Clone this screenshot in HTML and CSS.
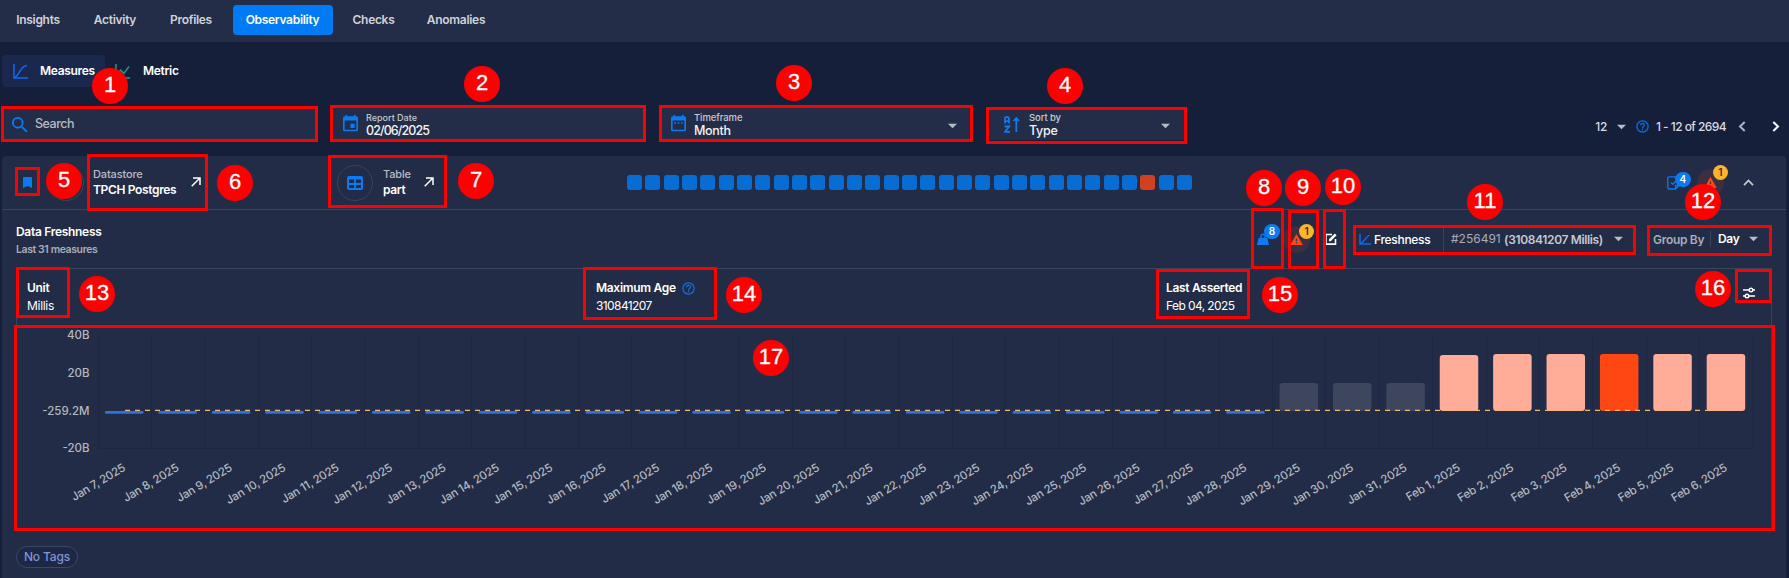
FILE: index.html
```html
<!DOCTYPE html>
<html lang="en">
<head>
<meta charset="utf-8">
<title>Observability</title>
<link rel="stylesheet" href="styles.css">
</head>
<body>
<svg class="defs" width="0" height="0">
  <symbol id="caret" viewBox="0 0 10 6"><path d="M0 .5h10L5 5.5z" fill="currentColor"/></symbol>
  <symbol id="measure" viewBox="0 0 16 16"><path d="M1 0v15h15M1.500 14.500C7.500 12 7.500 1.500 15 1.500" fill="none" stroke="currentColor" stroke-width="1.600"/></symbol>
  <symbol id="help" viewBox="0 0 24 24"><path fill="currentColor" d="M11 18h2v-2h-2v2m1-16A10 10 0 0 0 2 12a10 10 0 0 0 20 0A10 10 0 0 0 12 2m0 18a8 8 0 1 1 0-16 8 8 0 0 1 0 16m0-14a4 4 0 0 0-4 4h2a2 2 0 1 1 4 0c0 2-3 1.750-3 5h2c0-2.250 3-2.500 3-5a4 4 0 0 0-4-4"/></symbol>
  <symbol id="arrow" viewBox="0 0 10 10"><path d="M.7 9.300 8.700 1.300M2 1h7v7" fill="none" stroke="currentColor" stroke-width="1.500"/></symbol>
  <symbol id="alert" viewBox="0 0 22 19"><path fill="currentColor" d="M0 19h22L11 0 0 19m12-3h-2v-2h2v2m0-4h-2V8h2v4"/></symbol>
</svg>
<div class="page">
  <nav class="tabs">
    <span class="tab w1"><b>Insights</b></span>
    <span class="tab w2"><b>Activity</b></span>
    <span class="tab w3"><b>Profiles</b></span>
    <span class="tab w4 active"><b>Observability</b></span>
    <span class="tab w5"><b>Checks</b></span>
    <span class="tab w6"><b>Anomalies</b></span>
  </nav>
  <div class="modes">
    <span class="mode on"><svg class="i15"><use href="#measure"/></svg><span>Measures</span></span>
    <span class="mode metric"><svg class="i15 green" viewBox="0 0 16 16"><path d="M1 0v15h15M1.500 12 6 6.500l3.500 3.500L15 2.500" fill="none" stroke="currentColor" stroke-width="1.600"/></svg><span>Metric</span></span>
  </div>
  <div class="filters">
    <div class="field search">
      <svg class="mag" viewBox="0 0 18 18"><path fill="currentColor" d="M6.500 0A6.500 6.500 0 0 1 13 6.500c0 1.610-.59 3.090-1.560 4.230l.27.27h.79l5 5-1.500 1.500-5-5v-.79l-.27-.27A6.500 6.500 0 1 1 6.500 0m0 2a4.500 4.500 0 1 0 0 9 4.500 4.500 0 0 0 0-9"/></svg>
      <span class="ph">Search</span>
    </div>
    <div class="field date">
      <svg class="cal" viewBox="0 0 18 20"><path fill="currentColor" d="M16 18H2V7h14m-3-7v2H5V0H3v2H2a2 2 0 0 0-2 2v14a2 2 0 0 0 2 2h14a2 2 0 0 0 2-2V4a2 2 0 0 0-2-2h-1V0m-1 11H9v5h5z"/></svg>
      <span class="lv"><small>Report Date</small><span class="dv">02/06/2025</span></span>
    </div>
    <div class="field frame">
      <svg class="cal" viewBox="0 0 18 20"><path fill="currentColor" d="M16 18H2V7h14v11m0-16h-1V0h-2v2H5V0H3v2H2a2 2 0 0 0-2 2v14a2 2 0 0 0 2 2h14a2 2 0 0 0 2-2V4a2 2 0 0 0-2-2M4 9h2v2H4zm4 0h2v2H8zm4 0h2v2h-2z"/></svg>
      <span class="lv"><small>Timeframe</small><span>Month</span></span>
      <svg class="caret"><use href="#caret"/></svg>
    </div>
    <div class="field sort">
      <svg class="az" viewBox="0 0 16 17"><path d="M1 7.500V2.500Q1 1 3 1t2 1.500v5M1 5.200h4M.5 10.500h4.800L1 15.800h5M12.300 16V2M9.500 5l2.800-3 2.800 3" fill="none" stroke="currentColor" stroke-width="1.800"/></svg>
      <span class="lv"><small>Sort by</small><span>Type</span></span>
      <svg class="caret"><use href="#caret"/></svg>
    </div>
    <div class="pager">
      <span class="pn">12</span><svg class="caret"><use href="#caret"/></svg><svg class="help"><use href="#help"/></svg><span class="range">1 - 12 of 2694</span>
      <svg class="chev" viewBox="0 0 8 11"><path d="M6.700 1 2 5.500 6.700 10" fill="none" stroke="#aeb2bd" stroke-width="2"/></svg>
      <svg class="chev next" viewBox="0 0 8 11"><path d="M1.300 1 6 5.500 1.300 10" fill="none" stroke="#fff" stroke-width="2"/></svg>
    </div>
  </div>
  <section class="card">
    <header class="head">
      <svg class="mark" viewBox="0 0 9 11"><path d="M0 1a1 1 0 0 1 1-1h7a1 1 0 0 1 1 1v10L4.500 9 0 11z" fill="currentColor"/></svg>
      <span class="ring store"></span>
      <span class="src s1"><span>Datastore</span><b>TPCH Postgres</b></span>
      <svg class="go"><use href="#arrow"/></svg>
      <span class="ring table"><svg width="16" height="14" viewBox="0 0 16 14"><rect x="1" y="1" width="14" height="12" rx="1" fill="none" stroke="currentColor" stroke-width="2"/><path d="M1 2h14" stroke="currentColor" stroke-width="3"/><path d="M1 8h14M8 3v10" stroke="currentColor" stroke-width="1.800"/></svg></span>
      <span class="src s2"><span>Table</span><b>part</b></span>
      <svg class="go"><use href="#arrow"/></svg>
      <span class="cells" id="cells"></span>
      <span class="status chk"><svg width="13" height="14" viewBox="0 0 13 14"><path d="M8.500 13H2.200Q.8 13 .8 11.600V2.200Q.8.8 2.200.8h8.600q1.400 0 1.400 1.400v7.200zM8.500 13V9.500h3.600M4 6.500l1.800 1.800 3.200-3.300" fill="none" stroke="currentColor" stroke-width="1.300"/></svg><i class="badge">4</i></span>
      <span class="status warn"><svg width="13" height="11"><use href="#alert"/></svg><i class="badge amber">1</i></span>
      <svg class="up" viewBox="0 0 11 7"><path d="M1 6.200 5.500 1.500 10 6.200" fill="none" stroke="#c4c7cf" stroke-width="1.800"/></svg>
    </header>
    <div class="sub">
      <div class="title"><b>Data Freshness</b><span>Last 31 measures</span></div>
      <span class="status bag"><svg width="12" height="12" viewBox="0 0 12 12"><path fill="currentColor" d="M0 12 1.500 5h9L12 12z"/><circle cx="6" cy="3.500" r="2.200" fill="none" stroke="currentColor" stroke-width="1.400"/></svg><i class="badge">8</i></span>
      <span class="status warn two"><svg width="13" height="11"><use href="#alert"/></svg><i class="badge amber">1</i></span>
      <svg class="edit" viewBox="0 0 12 12"><path d="M7 1.500H.9v9.600h9.600V6" fill="none" stroke="#fff" stroke-width="1.600"/><path d="M4 8.200V6.300L9.800.5l1.800 1.800L5.800 8.200z" fill="#fff"/></svg>
      <div class="pick fresh"><svg class="i11" viewBox="0 0 12 11"><path d="M1 0v10h11M1.500 9.500C5 8 6 4 10.500 1" fill="none" stroke="#1566ea" stroke-width="1.500"/></svg><span class="f1">Freshness</span><span class="f2">#256491</span><b>(310841207 Millis)</b><svg class="caret"><use href="#caret"/></svg></div>
      <div class="pick group"><span class="g1">Group By</span><b class="g2">Day</b><svg class="caret"><use href="#caret"/></svg></div>
    </div>
    <div class="panel">
      <div class="facts">
        <div class="fact c1"><b>Unit</b><span>Millis</span></div>
        <div class="fact c2"><b>Maximum Age <svg class="help"><use href="#help"/></svg></b><span class="num">310841207</span></div>
        <div class="fact c3"><b>Last Asserted</b><span class="num">Feb 04, 2025</span></div>
        <svg class="tune" viewBox="0 0 12 12"><g fill="none" stroke="#fff" stroke-width="1.400"><path d="M0 3h6M10 3h2M0 9h2M6 9h6"/><circle cx="8" cy="3" r="1.800"/><circle cx="4" cy="9" r="1.800"/></g></svg>
      </div>
      <svg class="chart" id="chart" width="1755" height="207" viewBox="16 324 1755 207"></svg>
    </div>
    <span class="tag">No Tags</span>
  </section>
  <div class="notes">
    <i class="box b1"></i><i class="box b2"></i><i class="box b3"></i><i class="box b4"></i><i class="box b5"></i><i class="box b6"></i><i class="box b7"></i><i class="box b8"></i><i class="box b9"></i><i class="box b10"></i><i class="box b11"></i><i class="box b12"></i><i class="box b13"></i><i class="box b14"></i><i class="box b15"></i><i class="box b16"></i><i class="box b17"></i>
    <i class="dot d1">1</i><i class="dot d2">2</i><i class="dot d3">3</i><i class="dot d4">4</i><i class="dot d5">5</i><i class="dot d6">6</i><i class="dot d7">7</i><i class="dot d8">8</i><i class="dot d9">9</i><i class="dot d10">10</i><i class="dot d11">11</i><i class="dot d12">12</i><i class="dot d13">13</i><i class="dot d14">14</i><i class="dot d15">15</i><i class="dot d16">16</i><i class="dot d17">17</i>
  </div>
</div>
<script src="chart.js"></script>
</body>
</html>
```
FILE: styles.css
```css
* { box-sizing: border-box; }
body { margin: 0; background: #161f3a; font-family: Inter, "Liberation Sans", sans-serif; font-size: 12px; letter-spacing: -0.3px; color: #fff; }
b { font-weight: 600; }
i { font-style: normal; }
svg { flex: none; display: block; }
.defs { position: absolute; }
.page { position: relative; width: 1789px; height: 578px; overflow: hidden; display: flex; flex-direction: column; white-space: nowrap; }
.tabs { height: 42px; flex: none; background: #242d48; display: flex; align-items: center; padding: 0 0 2px 4px; color: #d0d2d9; }
.tab { height: 30px; display: flex; align-items: center; justify-content: center; border-radius: 4px; padding: 0 1px 2px 0; }
.w1 { width: 69px; margin-right: 8px; } .w2 { width: 69px; margin-right: 8px; } .w3 { width: 67px; margin-right: 8px; }
.w4 { width: 100px; margin-right: 8px; } .w5 { width: 66px; margin-right: 8px; } .w6 { width: 83px; }
.active { background: #007bf5; color: #fff; }
.modes { height: 62px; flex: none; padding: 13px 0 0 2px; display: flex; font-weight: 600; }
.mode { height: 32px; display: flex; align-items: center; padding-left: 11px; gap: 12px; border-radius: 4px; }
.mode span { margin-bottom: 2px; }
.on { width: 103px; background: #1a284d; }
.metric { padding-left: 10px; gap: 13px; }
.i15 { width: 15px; height: 15px; color: #0b6cf2; }
.green { color: #1c9f85; }
.filters { height: 52px; flex: none; display: flex; }
.field { background: #242d48; height: 32px; margin-top: 4px; display: flex; color: #f2f3f5; }
.field > svg { color: #0b7af3; }
.search { width: 315px; margin: 4px 14px 0 2px; padding-left: 10px; align-items: center; }
.mag { width: 16px; height: 16px; margin-top: 2px; }
.ph { margin-left: 7px; color: #b7bac4; font-size: 12.5px; line-height: 30px; margin-bottom: 1px; font-weight: 500; letter-spacing: -0.5px; }
.date { width: 313px; margin-right: 15px; padding-left: 12px; }
.cal { width: 15px; height: 18px; margin-top: 6px; }
.lv { margin: 3px 0 0 8px; display: flex; flex-direction: column; font-weight: 500; line-height: 13px; flex: 1; font-size: 12.5px; }
.lv small { font-size: 9.5px; line-height: 13px; color: #c6c8d0; letter-spacing: -0.1px; }
.date .lv small { letter-spacing: 0; font-size: 9px; }
.lv .dv { font-size: 12.5px; letter-spacing: -0.9px; }
.date .lv { margin-left: 8px; }
.frame { width: 313px; padding-left: 12px; margin-right: 14px; }
.field .caret, .caret { width: 9px; height: 6px; color: #b9bcc5; }
.field .caret { margin: 15px 15px 0 0; }
.sort { width: 200px; padding-left: 18px; }
.az { width: 16px; height: 17px; margin-top: 8px; }
.sort .lv { margin-left: 9px; }
.sort .caret { margin-right: 16px; }
.pager { flex: 1; display: flex; align-items: center; justify-content: flex-end; padding: 0 9px 7px 0; font-weight: 500; color: #d9dbe0; }
.pn { margin-right: -1px; }
.pager .caret { margin: 0 9px 0 11px; }
.help { width: 15px; height: 15px; color: #0a72f0; }
.range { margin: 0 12px 0 6px; width: 70px; letter-spacing: -0.55px; }
.chev { width: 8px; height: 11px; }
.next { margin-left: 26px; }
.card { margin: 0 3px 0 2px; height: 430px; background: #232c46; border-radius: 4px 4px 0 0; display: flex; flex-direction: column; align-items: flex-start; }
.head { width: 100%; height: 54px; flex: none; border-bottom: 1px solid #3a435b; display: flex; align-items: center; }
.mark { width: 9px; height: 11px; margin: 0 16px 0 21px; color: #0b7af3; }
.ring { width: 36px; height: 36px; border: 1px solid #3a435b; border-radius: 50%; display: flex; align-items: center; justify-content: center; color: #0b7af3; }
.src { display: flex; flex-direction: column; line-height: 15px; margin-bottom: 1px; }
.src span { color: #b9bcc5; font-size: 11px; font-weight: 500; letter-spacing: -0.15px; }
.src b { letter-spacing: -0.35px; }
.s1 { margin-left: 9px; width: 98px; }
.go { width: 10px; height: 10px; margin-bottom: 2px; }
.table { margin-left: 136px; }
.s2 { margin-left: 10px; width: 41px; }
.cells { margin-left: 193px; display: flex; gap: 3.33px; }
.cells i { width: 15px; height: 15px; border-radius: 3px; background: #076dd4; }
.cells .bad { background: #d0421f; }
.status { position: relative; display: flex; align-items: center; justify-content: center; height: 27px; flex: none; }
.badge { position: absolute; font-size: 10px; font-weight: 600; line-height: 15px; width: 16px; height: 15px; border-radius: 8px; background: #0b7af3; color: #fff; text-align: center; letter-spacing: 0; }
.amber { background: #fdb52a; color: #3a2b16; width: 15px; }
.chk { margin-left: 475px; width: 14px; color: #0b7af3; }
.chk .badge { left: 8px; top: 3px; }
.warn { width: 27px; border-radius: 50%; background: #3b2f40; color: #ff4713; margin-left: 16px; }
.warn .badge { left: 16px; top: -4px; }
.up { width: 11px; height: 7px; margin-left: 19px; }
.sub { height: 58px; flex: none; width: 100%; display: flex; align-items: center; padding-left: 14px; }
.title { display: flex; flex-direction: column; line-height: 18px; width: 1241px; margin-top: 4px; }
.title span { font-size: 10.5px; color: #a9adb9; font-weight: 600; letter-spacing: -0.4px; }
.bag { color: #0b7af3; width: 12px; }
.bag .badge { left: 7px; top: -2px; }
.two { margin-left: 14px; }
.two .badge { top: -2px; }
.edit { width: 12px; height: 12px; margin-left: 15px; }
.pick { display: flex; align-items: center; height: 28px; }
.fresh { margin-left: 22px; width: 276px; color: #c6c8d0; }
.i11 { width: 12px; height: 11px; }
.f1 { color: #fff; font-weight: 500; width: 69px; margin-left: 3px; }
.f2 { border-left: 1px solid #3a435b; padding-left: 7px; line-height: 26px; width: 61px; color: #a9adb9; letter-spacing: 0; }
.fresh b { width: 110px; letter-spacing: -0.35px; }
.group { margin-left: 18px; }
.g1 { width: 57px; color: #a9adb9; font-weight: 600; }
.g2 { border-left: 1px solid #3a435b; padding-left: 7px; width: 39px; line-height: 16px; }
.panel { margin-left: 14px; width: 1756px; height: 263px; flex: none; border: 1px solid #3a435b; border-bottom: 0; }
.facts { height: 55px; display: flex; padding: 10px 0 0 10px; line-height: 18px; }
.fact { display: flex; flex-direction: column; }
.fact b { display: flex; align-items: center; gap: 5px; }
.c1 { width: 569px; } .c2 { width: 570px; } .c3 { width: 577px; }
.num { letter-spacing: -0.6px; }
.tune { width: 12px; height: 12px; margin-top: 8px; }
.chart { font-size: 11.5px; }
.chart text { fill: #b4b7bf; text-anchor: end; font-weight: 500; letter-spacing: -0.25px; }
.tag { margin: 15px 0 0 14px; width: 62px; height: 22px; border: 1px solid #3a4668; border-radius: 11px; background: #1e2844; color: #7f93dc; font-weight: 500; line-height: 20px; text-align: center; letter-spacing: -0.15px; }
.box { position: absolute; border: 3px solid #fe0000; }
.b1 { left: 1px; top: 106px; width: 317px; height: 36px; }
.b2 { left: 330px; top: 105px; width: 316px; height: 37px; }
.b3 { left: 659px; top: 105px; width: 314px; height: 37px; }
.b4 { left: 986px; top: 107px; width: 201px; height: 37px; }
.b5 { left: 15px; top: 167px; width: 25px; height: 29px; }
.b6 { left: 87px; top: 154px; width: 121px; height: 57px; }
.b7 { left: 328px; top: 155px; width: 119px; height: 53px; }
.b8 { left: 1251px; top: 208px; width: 33px; height: 61px; }
.b9 { left: 1288px; top: 210px; width: 31px; height: 59px; }
.b10 { left: 1323px; top: 209px; width: 23px; height: 60px; }
.b11 { left: 1353px; top: 225px; width: 283px; height: 30px; }
.b12 { left: 1647px; top: 225px; width: 125px; height: 31px; }
.b13 { left: 16px; top: 267px; width: 54px; height: 51px; }
.b14 { left: 583px; top: 267px; width: 134px; height: 53px; }
.b15 { left: 1156px; top: 269px; width: 94px; height: 50px; }
.b16 { left: 1735px; top: 269px; width: 37px; height: 34px; }
.b17 { left: 14px; top: 325px; width: 1761px; height: 206px; }
.dot { position: absolute; width: 36px; height: 36px; border-radius: 50%; background: #fe0000; font: 22px/34px "Liberation Sans", sans-serif; text-align: center; letter-spacing: 0; -webkit-text-stroke: 0.3px #fff; }
.d1 { left: 92px; top: 68px; } .d2 { left: 464px; top: 66px; } .d3 { left: 776px; top: 65px; } .d4 { left: 1047px; top: 68px; }
.d5 { left: 46px; top: 163px; } .d6 { left: 217px; top: 165px; } .d7 { left: 458px; top: 163px; }
.d8 { left: 1246px; top: 170px; } .d9 { left: 1285px; top: 170px; } .d10 { left: 1325px; top: 169px; } .d11 { left: 1467px; top: 184px; } .d12 { left: 1685px; top: 184px; }
.d13 { left: 79px; top: 276px; } .d14 { left: 726px; top: 277px; } .d15 { left: 1262px; top: 277px; } .d16 { left: 1695px; top: 271px; } .d17 { left: 753px; top: 340px; }
```
FILE: chart.js
```javascript
const cells = document.getElementById("cells");
for (let i = 0; i < 31; i++) {
  const c = document.createElement("i");
  if (i === 28) c.className = "bad";
  cells.appendChild(c);
}

const left = 96.5, step = 53.39, zero = 411;
let out = "";
for (let i = 0; i <= 31; i++) {
  const x = Math.round(left + 1 + i * step) - 0.5;
  out += `<path d="M${x} 336V448.5" stroke="#1e2740"/>`;
}
out += `<path d="M97 448.500H1752" stroke="#1e2740"/>`;
[["40B", 335], ["20B", 373], ["-259.2M", 411], ["-20B", 448]].forEach(([t, y]) => {
  out += `<text class="tick" x="88.500" y="${y + 4}" style="letter-spacing:0">${t}</text>`;
});
for (let i = 0; i < 31; i++) {
  const x = left + i * step + 7.5;
  if (i < 22) out += `<rect x="${x}" y="411" width="38.500" height="2.800" rx="1" fill="#2e72dc"/>`;
  else {
    const top = i < 25 ? 383 : i === 25 ? 355 : 354;
    const fill = i < 25 ? "#3e465e" : i === 28 ? "#ff4713" : "#ffad99";
    out += `<rect x="${x}" y="${top}" width="38.500" height="${zero - top}" rx="3" fill="${fill}"/>`;
  }
  const label = i < 25 ? `Jan ${i + 7}, 2025` : `Feb ${i - 24}, 2025`;
  out += `<text transform="translate(${left + (i + 0.5) * step + 2} 470) rotate(-31)">${label}</text>`;
}
out += `<path d="M124 410.400H1726" stroke="#f5b96e" stroke-width="1.300" stroke-dasharray="5 5"/>`;
document.getElementById("chart").innerHTML = out;
```
